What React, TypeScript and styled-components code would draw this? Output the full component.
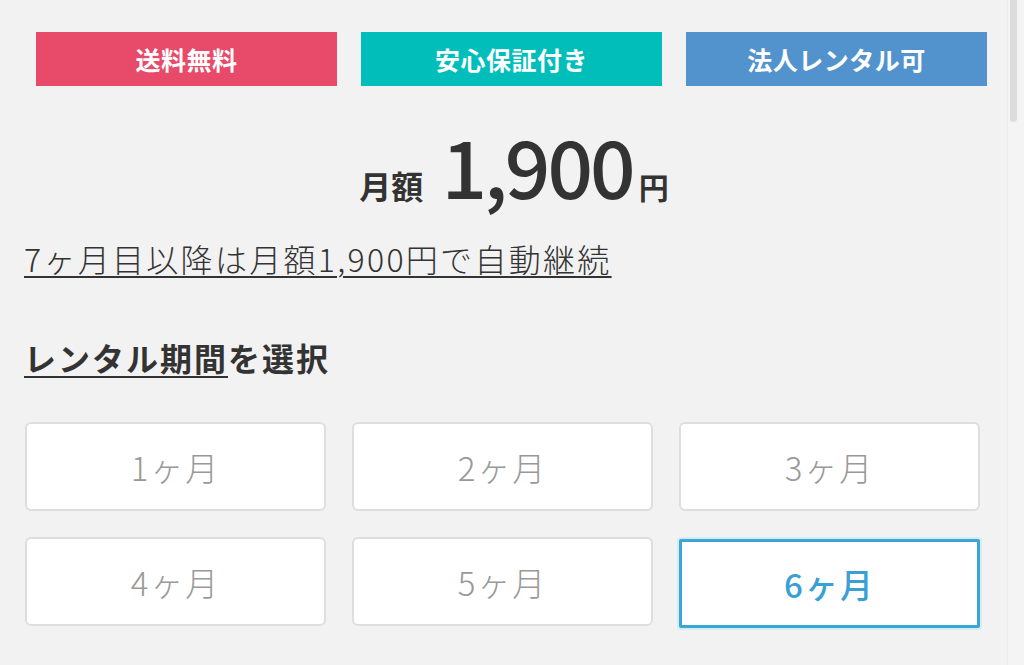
import React, { useState } from 'react'
import styled, { createGlobalStyle } from 'styled-components'

const GlobalStyle = createGlobalStyle`
  html, body {
    margin: 0;
    padding: 0;
    background: #f2f2f2;
    overflow: hidden;
  }
  body {
    font-family: "Noto Sans CJK JP", "Noto Sans", sans-serif;
    color: #333;
  }
`

const Page = styled.div`
  position: relative;
  width: 1024px;
  height: 665px;
  box-sizing: border-box;
  padding: 32px 24px 0 24px;
  display: flex;
  flex-direction: column;
`

const Scrollbar = styled.div`
  position: absolute;
  top: 0;
  right: 0;
  width: 16px;
  height: 665px;
  background: #f4f4f4;
  border-left: 1px solid #ececec;
`

const Thumb = styled.div`
  margin-left: 2px;
  width: 7px;
  height: 122px;
  border-radius: 0 0 4px 4px;
  background: #dcdcdc;
`

const BadgeRow = styled.div`
  display: flex;
  gap: 24px;
  padding-left: 12px;
`

const Badge = styled.div<{ $bg: string }>`
  width: 301px;
  height: 54px;
  display: flex;
  align-items: center;
  justify-content: center;
  background: ${p => p.$bg};
  color: #fff;
  font-size: 25px;
  font-weight: 700;
  letter-spacing: 0.5px;
`

const PriceRow = styled.div`
  display: flex;
  justify-content: center;
  align-items: baseline;
  margin-top: 38px;
  height: 82px;
  padding-left: 4px;
`

const PriceLabel = styled.span`
  font-size: 32px;
  font-weight: 700;
  margin-right: 18px;
`

const PriceValue = styled.span`
  font-size: 80px;
  font-weight: 500;
  letter-spacing: -3px;
  line-height: 1;
  color: #333;
`

const Yen = styled.span`
  font-size: 30px;
  font-weight: 700;
  margin-left: 6px;
`

const Note = styled.a`
  margin-top: 30px;
  align-self: flex-start;
  font-size: 32px;
  font-weight: 300;
  letter-spacing: 2.3px;
  color: #333;
  text-decoration: underline;
  text-decoration-thickness: 2px;
  text-underline-offset: 4px;
  line-height: 44px;
`

const Heading = styled.h2`
  margin: 55px 0 0 0;
  font-size: 32px;
  font-weight: 700;
  letter-spacing: 2px;
  line-height: 44px;
`

const HeadingLink = styled.span`
  text-decoration: underline;
  text-decoration-thickness: 2px;
  text-underline-offset: 5px;
`

const OptionGrid = styled.div`
  display: grid;
  grid-template-columns: repeat(3, 301px);
  column-gap: 26px;
  row-gap: 26px;
  margin-top: 43px;
  margin-left: 1px;
`

const Option = styled.button<{ $active: boolean }>`
  height: 89px;
  box-sizing: border-box;
  background: #fff;
  border: ${p => (p.$active ? '3px solid #3aa6d8' : '2px solid #dedede')};
  border-radius: ${p => (p.$active ? '2px' : '6px')};
  box-shadow: ${p => (p.$active ? '0 0 0 2px #d7ebf5' : 'none')};
  font-family: "Noto Sans CJK JP", "Noto Sans", sans-serif;
  font-size: 33px;
  font-weight: ${p => (p.$active ? 500 : 300)};
  color: ${p => (p.$active ? '#3a9fd4' : '#999')};
  letter-spacing: 2px;
  cursor: pointer;
  padding: 0;
  margin-top: ${p => (p.$active ? '2px' : '0')};
`

const badges = [
  { label: '送料無料', bg: '#e84a6a' },
  { label: '安心保証付き', bg: '#02bebb' },
  { label: '法人レンタル可', bg: '#5393cd' },
]

const App = () => {
  const [months, setMonths] = useState(6)

  return (
    <>
      <GlobalStyle />
      <Page>
        <BadgeRow>
          {badges.map(b => (
            <Badge key={b.label} $bg={b.bg}>{b.label}</Badge>
          ))}
        </BadgeRow>
        <PriceRow>
          <PriceLabel>月額</PriceLabel>
          <PriceValue>1,900</PriceValue>
          <Yen>円</Yen>
        </PriceRow>
        <Note>7ヶ月目以降は月額1,900円で自動継続</Note>
        <Heading>
          <HeadingLink>レンタル期間</HeadingLink>を選択
        </Heading>
        <OptionGrid>
          {[1, 2, 3, 4, 5, 6].map(m => (
            <Option key={m} $active={m === months} onClick={() => setMonths(m)}>
              {m}ヶ月
            </Option>
          ))}
        </OptionGrid>
        <Scrollbar>
          <Thumb />
        </Scrollbar>
      </Page>
    </>
  )
}

export default App
